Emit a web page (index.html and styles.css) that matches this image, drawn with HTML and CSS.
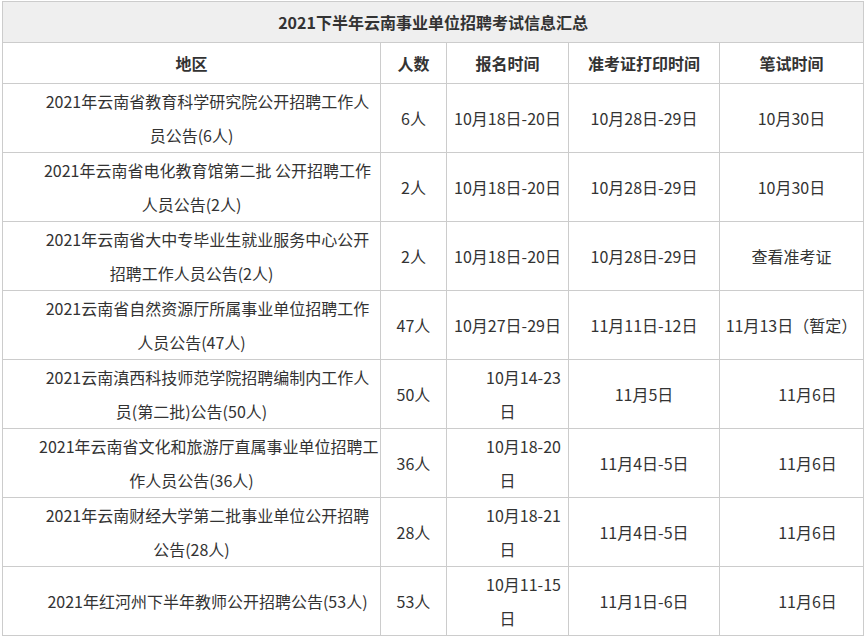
FILE: index.html
```html
<!DOCTYPE html>
<html lang="zh-CN">
<head>
<meta charset="utf-8">
<title>2021下半年云南事业单位招聘考试信息汇总</title>
<link rel="stylesheet" href="styles.css">
</head>
<body>
<table class="info">
  <colgroup>
    <col class="c1"><col class="c2"><col class="c3"><col class="c4"><col class="c5">
  </colgroup>
  <thead>
    <tr class="title"><th colspan="5">2021下半年云南事业单位招聘考试信息汇总</th></tr>
    <tr class="head"><th>地区</th><th>人数</th><th>报名时间</th><th>准考证打印时间</th><th>笔试时间</th></tr>
  </thead>
  <tbody>
    <tr><td class="ind">2021年云南省教育科学研究院公开招聘工作人<br>员公告(6人)</td><td>6人</td><td>10月18日-20日</td><td>10月28日-29日</td><td>10月30日</td></tr>
    <tr><td class="ind">2021年云南省电化教育馆第二批 公开招聘工作<br>人员公告(2人)</td><td>2人</td><td>10月18日-20日</td><td>10月28日-29日</td><td>10月30日</td></tr>
    <tr><td class="ind">2021年云南省大中专毕业生就业服务中心公开<br>招聘工作人员公告(2人)</td><td>2人</td><td>10月18日-20日</td><td>10月28日-29日</td><td>查看准考证</td></tr>
    <tr><td class="ind">2021云南省自然资源厅所属事业单位招聘工作<br>人员公告(47人)</td><td>47人</td><td>10月27日-29日</td><td>11月11日-12日</td><td class="full">11月13日（暂定）</td></tr>
    <tr><td class="ind">2021云南滇西科技师范学院招聘编制内工作人<br>员(第二批)公告(50人)</td><td>50人</td><td class="ind">10月14-23<br>日</td><td>11月5日</td><td class="ind">11月6日</td></tr>
    <tr><td class="ind">2021年云南省文化和旅游厅直属事业单位招聘工<br>作人员公告(36人)</td><td>36人</td><td class="ind">10月18-20<br>日</td><td>11月4日-5日</td><td class="ind">11月6日</td></tr>
    <tr><td class="ind">2021年云南财经大学第二批事业单位公开招聘<br>公告(28人)</td><td>28人</td><td class="ind">10月18-21<br>日</td><td>11月4日-5日</td><td class="ind">11月6日</td></tr>
    <tr><td class="ind">2021年红河州下半年教师公开招聘公告(53人)</td><td>53人</td><td class="ind">10月11-15<br>日</td><td>11月1日-6日</td><td class="ind">11月6日</td></tr>
  </tbody>
</table>
</body>
</html>
```
FILE: styles.css
```css
html, body {
  margin: 0;
  padding: 0;
  background: #fff;
}
body {
  padding: 1px 0 0 2px;
  font-family: "Noto Sans CJK SC", "Noto Sans", sans-serif;
  font-size: 16px;
  color: #333;
}
.info {
  border-collapse: collapse;
  table-layout: fixed;
  width: 861px;
}
.c1 { width: 378px; }
.c2 { width: 66px; }
.c3 { width: 122px; }
.c4 { width: 151px; }
.c5 { width: 144px; }
.info th,
.info td {
  border: 1px solid #ccc;
  padding: 0 4px;
  text-align: center;
  vertical-align: middle;
  white-space: nowrap;
}
.info th {
  font-weight: bold;
  line-height: 40px;
}
.title th {
  background: #efefef;
}
.info td {
  line-height: 34px;
  height: 68px;
}
.info td.ind {
  text-indent: 2em;
}
.info td.full {
  text-spacing-trim: space-all;
}
```
